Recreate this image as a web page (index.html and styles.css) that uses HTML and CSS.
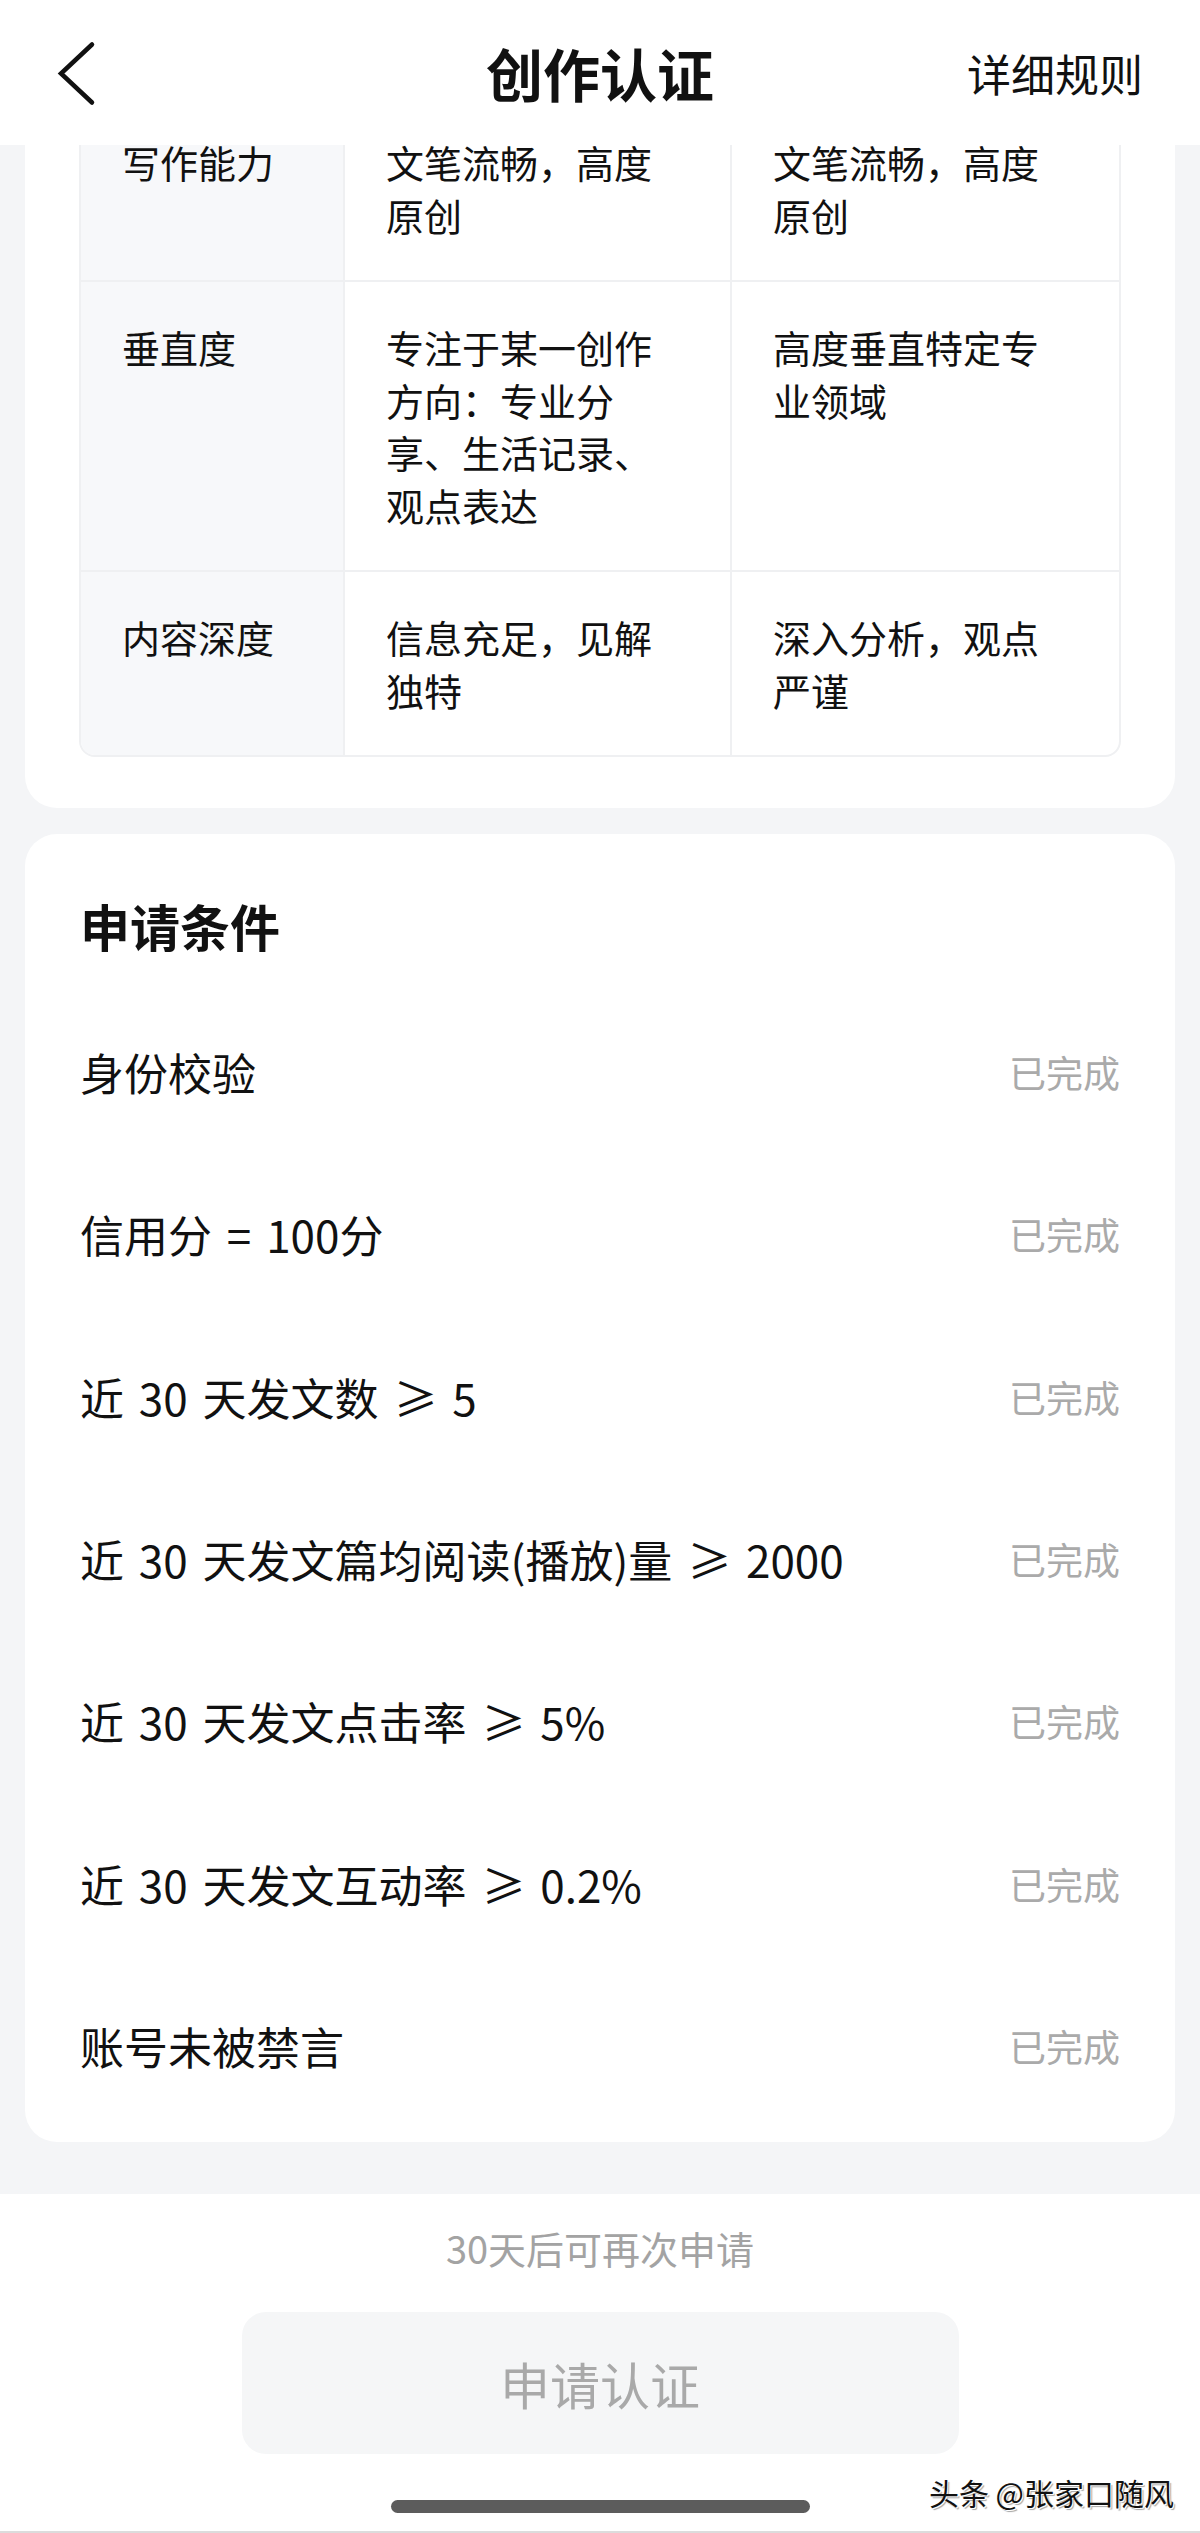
FILE: index.html
```html
<!DOCTYPE html>
<html lang="zh-CN">
<head>
  <meta charset="UTF-8">
  <title>创作认证</title>
  <meta name="viewport" content="width=device-width, initial-scale=1.0">
  <link rel="stylesheet" href="styles.css">
</head>
<body>
  <header class="topbar">
    <a class="back" href="#" aria-label="返回">
      <svg width="60" height="80" viewBox="0 0 60 80">
        <polyline points="46,11.5 15,40.5 46,69.5" fill="none" stroke="#111" stroke-width="4.5" stroke-linecap="round" stroke-linejoin="miter"/>
      </svg>
    </a>
    <h1>创作认证</h1>
    <a class="rules" href="#">详细规则</a>
  </header>

  <main class="content">
    <section class="card standards">
      <div class="grid-table">
        <div class="cell label">写作能力</div>
        <div class="cell">文笔流畅，高度原创</div>
        <div class="cell">文笔流畅，高度原创</div>

        <div class="cell label">垂直度</div>
        <div class="cell">专注于某一创作方向：专业分享、生活记录、观点表达</div>
        <div class="cell">高度垂直特定专业领域</div>

        <div class="cell label last">内容深度</div>
        <div class="cell last">信息充足，见解独特</div>
        <div class="cell last">深入分析，观点严谨</div>
      </div>
    </section>

    <section class="card conditions">
      <h2>申请条件</h2>
      <div class="cond-row"><span>身份校验</span><span class="done">已完成</span></div>
      <div class="cond-row"><span>信用分 = 100分</span><span class="done">已完成</span></div>
      <div class="cond-row"><span>近 30 天发文数 ≥ 5</span><span class="done">已完成</span></div>
      <div class="cond-row"><span>近 30 天发文篇均阅读(播放)量 ≥ 2000</span><span class="done">已完成</span></div>
      <div class="cond-row"><span>近 30 天发文点击率 ≥ 5%</span><span class="done">已完成</span></div>
      <div class="cond-row"><span>近 30 天发文互动率 ≥ 0.2%</span><span class="done">已完成</span></div>
      <div class="cond-row"><span>账号未被禁言</span><span class="done">已完成</span></div>
    </section>
  </main>

  <footer class="bottom">
    <p class="hint">30天后可再次申请</p>
    <button class="apply" disabled>申请认证</button>
    <div class="home-bar"></div>
  </footer>

  <div class="watermark">头条 @张家口随风</div>
</body>
</html>
```

FILE: styles.css
```css
* {
  box-sizing: border-box;
}

html, body {
  margin: 0;
  padding: 0;
}

body {
  width: 1200px;
  height: 2533px;
  position: relative;
  overflow: hidden;
  display: flex;
  flex-direction: column;
  background: #f4f5f7;
  color: #111;
  font-family: "Noto Sans CJK SC", "Noto Sans", sans-serif;
}

/* top bar sits over the scrolled content */
.topbar {
  position: absolute;
  top: 0;
  left: 0;
  right: 0;
  height: 145px;
  z-index: 5;
  background: #fff;
  display: grid;
  grid-template-columns: 1fr auto 1fr;
  align-items: center;
}

.back {
  display: flex;
  align-items: center;
  padding-left: 46px;
}

.topbar h1 {
  margin: 0;
  font-size: 57px;
  font-weight: 700;
  line-height: 1;
}

.rules {
  justify-self: end;
  padding-right: 57px;
  font-size: 44px;
  color: #111;
  text-decoration: none;
}

.content {
  padding-bottom: 52px;
}

.card {
  background: #fff;
  margin: 0 25px;
  border-radius: 32px;
}

.standards {
  border-radius: 0 0 32px 32px;
  padding: 95px 54px 51px;
}

.grid-table {
  display: grid;
  grid-template-columns: 264px 1fr 1fr;
  border: 2px solid #eff0f2;
  border-radius: 16px;
  overflow: hidden;
}

.cell {
  padding: 39px 60px 39px 41px;
  font-size: 38px;
  line-height: 52.5px;
  border-right: 2px solid #eff0f2;
  border-bottom: 2px solid #eff0f2;
}

.cell:nth-child(3n) {
  border-right: none;
}

.cell.last {
  border-bottom: none;
}

.cell.label {
  background: #f7f8fa;
}

.conditions {
  margin-top: 26px;
  padding: 60px 55px 15px;
}

.conditions h2 {
  margin: 0 0 35px;
  font-size: 50px;
  line-height: 62px;
  font-weight: 600;
}

.cond-row {
  height: 162.3px;
  display: flex;
  align-items: center;
  justify-content: space-between;
  font-size: 44px;
  word-spacing: 5px;
}

.done {
  font-size: 37px;
  color: #aaa;
}

.bottom {
  flex: 1;
  background: #fff;
  display: flex;
  flex-direction: column;
  align-items: center;
  border-bottom: 2px solid #dcdcdc;
}

.hint {
  margin: 29px 0 0;
  font-size: 38px;
  line-height: 50px;
  color: #a3a3a3;
}

.apply {
  margin-top: 39px;
  width: 717px;
  height: 142px;
  border: none;
  border-radius: 24px;
  background: #f5f6f7;
  color: #a9a9a9;
  font-family: inherit;
  font-size: 50px;
}

.home-bar {
  margin-top: 46px;
  width: 419px;
  height: 13px;
  border-radius: 7px;
  background: #5c5c5c;
}

.watermark {
  position: absolute;
  right: 26px;
  bottom: 23px;
  font-size: 30px;
  line-height: 36px;
  color: #111;
  text-shadow: 1px 1px 0 #fff, 2px 2px 1px rgba(0, 0, 0, 0.35);
}
```
